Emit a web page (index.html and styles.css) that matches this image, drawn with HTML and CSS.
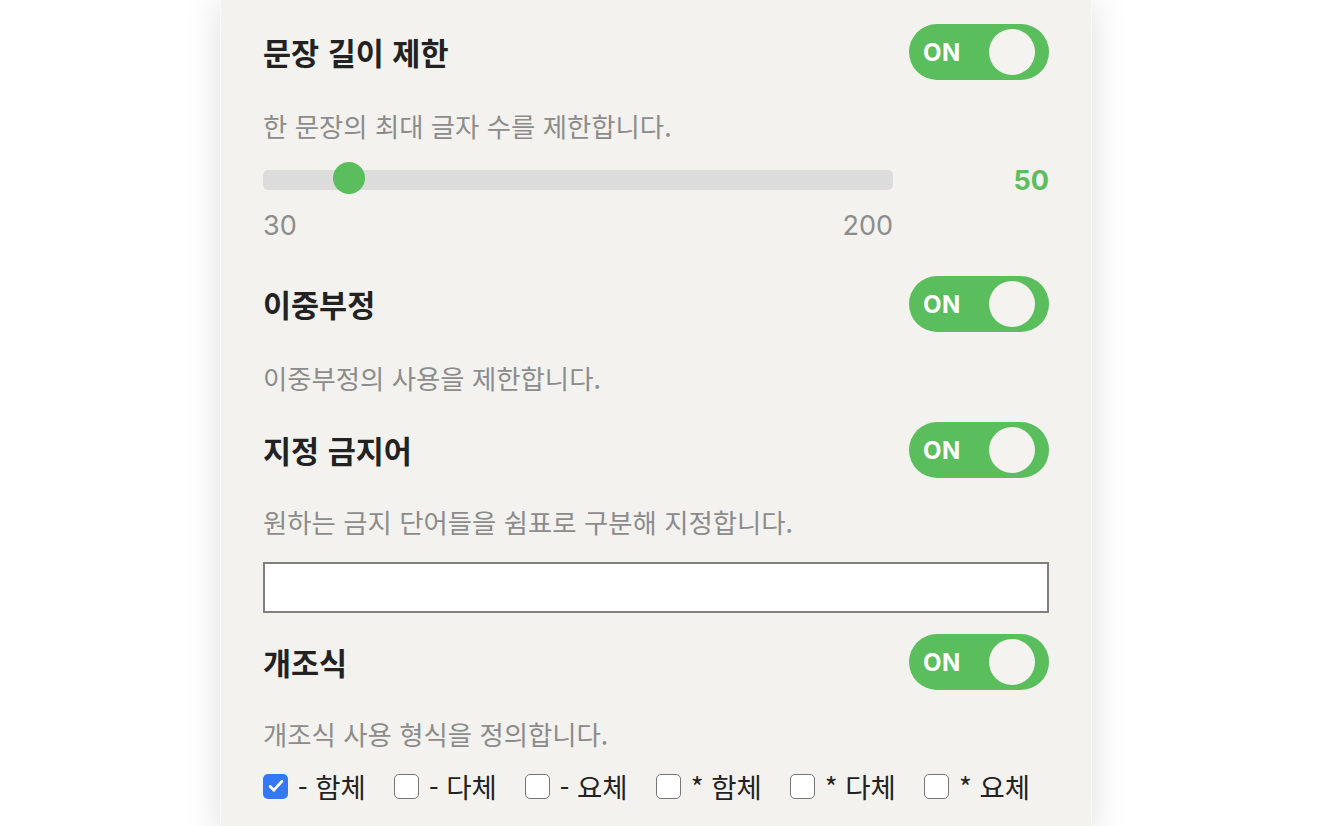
FILE: index.html
```html
<!DOCTYPE html>
<html lang="ko">
<head>
<meta charset="utf-8">
<title>설정</title>
<link rel="stylesheet" href="styles.css">
</head>
<body>
<div class="panel">
  <section class="section">
    <div class="header">
      <h2 class="title">문장 길이 제한</h2>
      <div class="toggle"><span class="toggle-text">ON</span><span class="knob"></span></div>
    </div>
    <p class="desc">한 문장의 최대 글자 수를 제한합니다.</p>
    <div class="slider-row">
      <input class="range" type="range" min="30" max="200" value="50">
      <span class="range-value">50</span>
    </div>
    <div class="range-labels"><span>30</span><span>200</span></div>
  </section>

  <section class="section sec2">
    <div class="header">
      <h2 class="title">이중부정</h2>
      <div class="toggle"><span class="toggle-text">ON</span><span class="knob"></span></div>
    </div>
    <p class="desc">이중부정의 사용을 제한합니다.</p>
  </section>

  <section class="section sec3">
    <div class="header">
      <h2 class="title">지정 금지어</h2>
      <div class="toggle"><span class="toggle-text">ON</span><span class="knob"></span></div>
    </div>
    <p class="desc desc-tight">원하는 금지 단어들을 쉼표로 구분해 지정합니다.</p>
    <input class="text-input" type="text">
  </section>

  <section class="section sec4">
    <div class="header">
      <h2 class="title">개조식</h2>
      <div class="toggle"><span class="toggle-text">ON</span><span class="knob"></span></div>
    </div>
    <p class="desc desc-tight">개조식 사용 형식을 정의합니다.</p>
    <div class="checks">
      <label class="check"><span class="box checked"><svg viewBox="0 0 24 24" width="20" height="20"><path d="M5 12.5l4.5 4.5L19 6.5" fill="none" stroke="#fff" stroke-width="3.4" stroke-linecap="round" stroke-linejoin="round"/></svg></span><span class="check-label">- 함체</span></label>
      <label class="check"><span class="box"></span><span class="check-label">- 다체</span></label>
      <label class="check"><span class="box"></span><span class="check-label">- 요체</span></label>
      <label class="check"><span class="box"></span><span class="check-label">* 함체</span></label>
      <label class="check"><span class="box"></span><span class="check-label">* 다체</span></label>
      <label class="check"><span class="box"></span><span class="check-label">* 요체</span></label>
    </div>
  </section>
</div>
</body>
</html>
```
FILE: styles.css
```css
html, body {
  margin: 0;
  padding: 0;
  background: #ffffff;
  height: 100%;
  overflow: hidden;
}

body {
  font-family: "Noto Sans CJK KR", Inter, sans-serif;
  color: #222222;
}

.panel {
  box-sizing: border-box;
  width: 872px;
  min-height: 100vh;
  margin-left: 220px;
  padding: 24px 42px 40px 42px;
  background: #f3f2ef;
  border-left: 1px solid #fafafa;
  border-right: 1px solid #fafafa;
  box-shadow: 0 0 36px rgba(0, 0, 0, 0.13);
}

.section {
  display: flex;
  flex-direction: column;
}

.sec2 { margin-top: 35px; }
.sec3 { margin-top: 28px; }
.sec4 { margin-top: 21px; }

.header {
  display: flex;
  align-items: center;
  justify-content: space-between;
  height: 56px;
}

.title {
  margin: 0;
  font-family: "Noto Sans CJK KR", sans-serif;
  font-size: 30.5px;
  font-weight: 700;
  color: #222222;
  line-height: 40px;
}

.toggle {
  box-sizing: border-box;
  display: flex;
  align-items: center;
  width: 140px;
  height: 56px;
  padding: 0 14px;
  border-radius: 28px;
  background: #5abe5d;
}

.toggle-text {
  color: #ffffff;
  font-family: Inter, "Liberation Sans", sans-serif;
  font-weight: 700;
  font-size: 24px;
  letter-spacing: 0.5px;
}

.knob {
  margin-left: auto;
  width: 46px;
  height: 46px;
  border-radius: 50%;
  background: #f4f3f0;
}

.desc {
  margin: 30px 0 0 0;
  font-family: "Noto Sans CJK KR", sans-serif;
  font-size: 26.4px;
  line-height: 32px;
  color: #8c8c8c;
}

.desc-tight {
  margin-top: 28px;
}

.slider-row {
  display: flex;
  align-items: center;
  height: 32px;
  margin-top: 22px;
}

.range {
  -webkit-appearance: none;
  appearance: none;
  width: 630px;
  height: 32px;
  margin: 0;
  padding: 0;
  background: transparent;
}

.range::-webkit-slider-runnable-track {
  height: 20px;
  border-radius: 5px;
  background: #dcdcdc;
}

.range::-webkit-slider-thumb {
  -webkit-appearance: none;
  appearance: none;
  width: 32px;
  height: 32px;
  margin-top: -8px;
  border-radius: 50%;
  background: #5abe5d;
  border: none;
}

.range-value {
  flex: 1;
  text-align: right;
  font-family: Inter, sans-serif;
  font-size: 27px;
  font-weight: 700;
  color: #5abe5d;
}

.range-labels {
  display: flex;
  justify-content: space-between;
  width: 630px;
  margin-top: 15px;
  font-family: Inter, sans-serif;
  font-size: 27px;
  line-height: 30px;
  color: #8c8c8c;
}

.text-input {
  box-sizing: border-box;
  width: 100%;
  height: 51px;
  margin-top: 24px;
  border: 2px solid #808080;
  border-radius: 0;
  background: #ffffff;
  outline: none;
  font-size: 20px;
}

.checks {
  display: flex;
  align-items: center;
  gap: 28px;
  margin-top: 23px;
  height: 26px;
}

.check {
  display: flex;
  align-items: center;
  gap: 10px;
}

.box {
  box-sizing: border-box;
  display: flex;
  align-items: center;
  justify-content: center;
  width: 25px;
  height: 25px;
  border: 1.5px solid #767676;
  border-radius: 5px;
  background: #ffffff;
}

.box.checked {
  border: none;
  background: #3478f6;
}

.check-label {
  font-family: "Noto Sans CJK KR", sans-serif;
  font-size: 27.5px;
  line-height: 30px;
  color: #222222;
}
```
